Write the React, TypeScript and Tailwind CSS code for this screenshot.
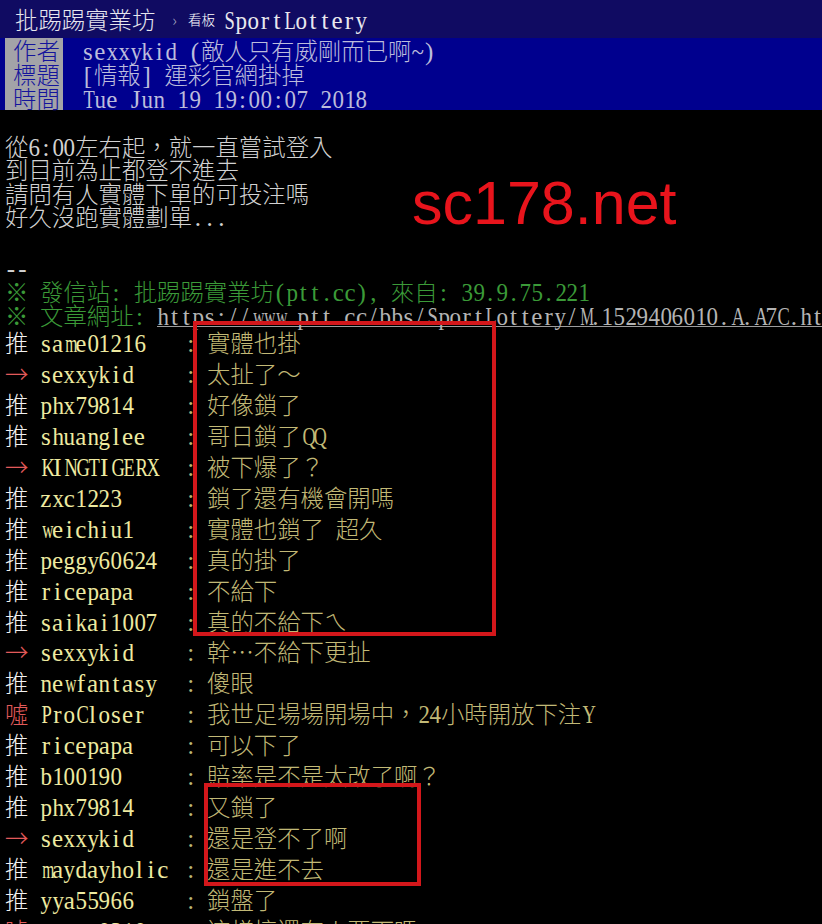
import React from "react";

// ptt's terminal font squeezes latin glyphs into half-width cells
const squeeze = (c: string) => {
  if ("mwMW".includes(c)) return "scale-x-[0.62]";
  if (/[A-HK-Z]/.test(c)) return "scale-x-[0.74]";
  if (/[0-9bdghknopquvxy~]/.test(c)) return "scale-x-[0.92]";
  return "";
};

const T = ({ s, cell = "w-[11.7px]" }: { s: string; cell?: string }) => {
  const parts = s.match(/[\x00-\x7f]+|[^\x00-\x7f]+/g) ?? [];
  return (
    <>
      {parts.map((p, i) =>
        /^[\x00-\x7f]/.test(p) ? (
          p.split("").map((c, j) => (
            <span
              key={`${i}-${j}`}
              className={`inline-block ${cell} text-center whitespace-pre font-['Liberation_Serif',serif] font-normal text-[25px] leading-[20px] ${squeeze(c)}`}
            >
              {c}
            </span>
          ))
        ) : (
          <span key={i}>{p}</span>
        )
      )}
    </>
  );
};

const pushes: [string, string, string][] = [
  ["推", "same01216", "實體也掛"],
  ["→", "sexxykid", "太扯了～"],
  ["推", "phx79814", "好像鎖了"],
  ["推", "shuanglee", "哥日鎖了QQ"],
  ["→", "KINGTIGERX", "被下爆了？"],
  ["推", "zxc1223", "鎖了還有機會開嗎"],
  ["推", "weichiu1", "實體也鎖了 超久"],
  ["推", "peggy60624", "真的掛了"],
  ["推", "ricepapa", "不給下"],
  ["推", "saikai1007", "真的不給下ㄟ"],
  ["→", "sexxykid", "幹…不給下更扯"],
  ["推", "newfantasy", "傻眼"],
  ["噓", "ProCloser", "我世足場場開場中，24小時開放下注Y"],
  ["推", "ricepapa", "可以下了"],
  ["推", "b100190", "賠率是不是太改了啊？"],
  ["推", "phx79814", "又鎖了"],
  ["→", "sexxykid", "還是登不了啊"],
  ["推", "maydayholic", "還是進不去"],
  ["推", "yya55966", "鎖盤了"],
  ["噓", "tommy0310", "這樣搞還有人要下嗎"],
];

const meta = [
  ["作者", "sexxykid (敵人只有威剛而已啊~)"],
  ["標題", "[情報] 運彩官網掛掉"],
  ["時間", "Tue Jun 19 19:00:07 2018"],
];

const body = [
  "從6:00左右起，就一直嘗試登入",
  "到目前為止都登不進去",
  "請問有人實體下單的可投注嗎",
  "好久沒跑實體劃單...",
];

export default function App() {
  return (
    <div className="relative w-[822px] h-[924px] overflow-hidden bg-black font-['Noto_Sans_CJK_TC',sans-serif] font-light text-[23.4px]">
      {/* board bar */}
      <div className="h-[38px] bg-[#100b62] flex items-center pl-[15px] leading-[38px] whitespace-nowrap">
        <span className="text-[#e6e6ee]">批踢踢實業坊</span>
        <span className="ml-[17px] text-[16px] text-[#a8a8c0]">›</span>
        <span className="ml-[11px] text-[13.5px] text-white">看板</span>
        <span className="ml-[8px] text-[#e8e8ee]">
          <T s="SportLottery" cell="w-[12px]" />
        </span>
      </div>

      {/* article meta */}
      <div className="bg-[#00008e] px-[5px]">
        {meta.map(([k, v]) => (
          <div key={k} className="h-[24px] flex leading-[24px] whitespace-nowrap">
            <div className="w-[58px] bg-[#a3a3a8] text-[#14149c] pl-[8px]">{k}</div>
            <div className="ml-[19px] text-[#bcbcdc]">
              <T s={v} cell="w-[11.9px]" />
            </div>
          </div>
        ))}
      </div>

      {/* article text */}
      <div className="px-[5px] pt-[25px] text-[#d2d2d2] whitespace-nowrap">
        {body.map((l, i) => (
          <div key={i} className="h-[23.4px] leading-[23.4px]">
            <T s={l} />
          </div>
        ))}
      </div>

      <div className="mt-[26px] px-[5px] whitespace-nowrap">
        <div className="h-[24px] leading-[24px] text-[#d2d2d2]">
          <T s="--" />
        </div>
        <div className="h-[24px] leading-[24px] text-[#3b9a38]">
          <T s="※ 發信站: 批踢踢實業坊(ptt.cc), 來自: 39.9.75.221" />
        </div>
        <div className="h-[24px] leading-[24px] text-[#3b9a38]">
          <T s="※ 文章網址: " />
          <span className="inline-block h-[22px] leading-[20px] border-b border-[#9c9c9c] text-[#b4b4b4]">
            <T s="https://www.ptt.cc/bbs/SportLottery/M.1529406010.A.A7C.html" />
          </span>
        </div>
      </div>

      {/* pushes */}
      <div className="mt-[0.5px] px-[5px] whitespace-nowrap">
        {pushes.map(([tag, who, msg], i) => (
          <div key={i} className="h-[30.94px] flex leading-[30.94px]">
            <div className={`w-[35px] ${tag === "推" ? "text-[#f2f2f2]" : "text-[#e25a5a]"}`}>{tag}</div>
            <div className="w-[145px] text-[#eeeaa0]">
              <T s={who} />
            </div>
            <div className="w-[22px] text-[#bdb574]">
              <T s=":" />
            </div>
            <div className="text-[#c2b976]">
              <T s={msg} />
            </div>
          </div>
        ))}
      </div>

      {/* watermark */}
      <div className="absolute left-[412px] top-[173px] font-['Liberation_Sans',sans-serif] font-normal text-[61px] leading-none text-[#e8141c]">
        sc178.net
      </div>

      {/* highlight boxes */}
      <div className="absolute left-[193px] top-[321px] w-[303px] h-[315px] border-4 border-[#d3171b]" />
      <div className="absolute left-[204px] top-[783px] w-[217px] h-[103px] border-4 border-[#d3171b]" />
    </div>
  );
}
